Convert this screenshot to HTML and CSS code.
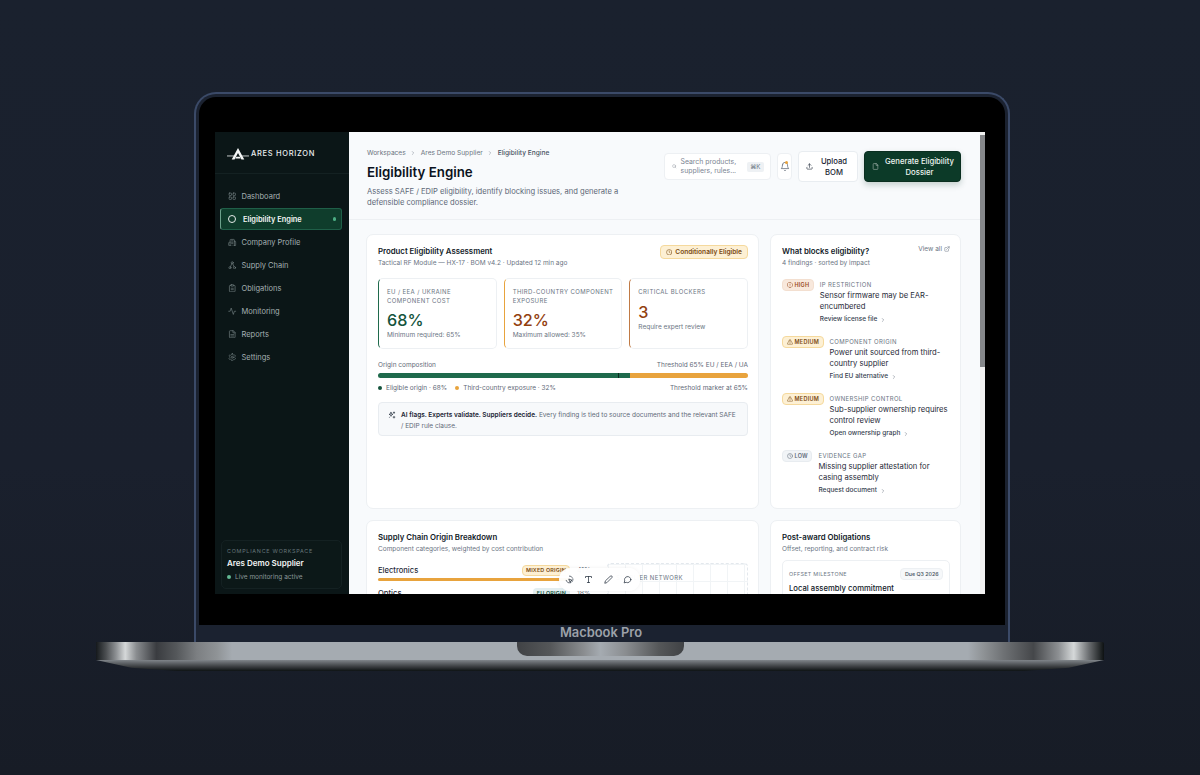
FILE: index.html
```html
<!DOCTYPE html>
<html>
<head>
    <meta charset="utf-8"/>
    <title>Eligibility Engine</title>
    <link rel="stylesheet" href="styles.css">
</head>

<body>
<svg class="defs" width="0" height="0">
    <symbol id="i-grid" viewBox="0 0 24 24"><rect x="3" y="3" width="7" height="7" rx="1.5"/><rect x="14" y="3" width="7" height="7" rx="1.5"/><rect x="3" y="14" width="7" height="7" rx="1.5"/><rect x="14" y="14" width="7" height="7" rx="1.5"/></symbol>
    <symbol id="i-building" viewBox="0 0 24 24"><path d="M6 22V6a2 2 0 0 1 2-2h8a2 2 0 0 1 2 2v16z"/><path d="M6 12H4a2 2 0 0 0-2 2v6a2 2 0 0 0 2 2h2"/><path d="M18 9h2a2 2 0 0 1 2 2v9a2 2 0 0 1-2 2h-2"/><path d="M10 8h4M10 12h4M10 16h4"/></symbol>
    <symbol id="i-network" viewBox="0 0 24 24"><circle cx="12" cy="5" r="3"/><circle cx="5.500" cy="19" r="3"/><circle cx="18.500" cy="19" r="3"/><path d="M10.500 7.700 7 16.300M13.500 7.700 17 16.300"/></symbol>
    <symbol id="i-clipboard" viewBox="0 0 24 24"><rect x="8" y="2" width="8" height="4" rx="1"/><path d="M16 4h2a2 2 0 0 1 2 2v14a2 2 0 0 1-2 2H6a2 2 0 0 1-2-2V6a2 2 0 0 1 2-2h2"/><path d="M9 12h6M9 16h6"/></symbol>
    <symbol id="i-activity" viewBox="0 0 24 24"><path d="M22 12h-4l-3 9L9 3l-3 9H2"/></symbol>
    <symbol id="i-file" viewBox="0 0 24 24"><path d="M14 2H6a2 2 0 0 0-2 2v16a2 2 0 0 0 2 2h12a2 2 0 0 0 2-2V8z"/><path d="M14 2v6h6M16 13H8M16 17H8"/></symbol>
    <symbol id="i-gear" viewBox="0 0 24 24"><path d="M12.220 2h-.44a2 2 0 0 0-2 2v.18a2 2 0 0 1-1 1.730l-.43.25a2 2 0 0 1-2 0l-.15-.08a2 2 0 0 0-2.730.730l-.22.38a2 2 0 0 0 .73 2.730l.15.1a2 2 0 0 1 1 1.720v.51a2 2 0 0 1-1 1.740l-.15.09a2 2 0 0 0-.73 2.730l.22.38a2 2 0 0 0 2.730.730l.15-.08a2 2 0 0 1 2 0l.43.25a2 2 0 0 1 1 1.730V20a2 2 0 0 0 2 2h.44a2 2 0 0 0 2-2v-.18a2 2 0 0 1 1-1.730l.43-.25a2 2 0 0 1 2 0l.15.08a2 2 0 0 0 2.730-.73l.22-.39a2 2 0 0 0-.73-2.730l-.15-.08a2 2 0 0 1-1-1.740v-.5a2 2 0 0 1 1-1.740l.15-.09a2 2 0 0 0 .73-2.730l-.22-.38a2 2 0 0 0-2.730-.73l-.15.08a2 2 0 0 1-2 0l-.43-.25a2 2 0 0 1-1-1.730V4a2 2 0 0 0-2-2z"/><circle cx="12" cy="12" r="3"/></symbol>
    <symbol id="i-clock" viewBox="0 0 24 24"><circle cx="12" cy="12" r="10"/><path d="M12 7v5l3 2"/></symbol>
    <symbol id="i-octagon" viewBox="0 0 24 24"><path d="M8 2h8l6 6v8l-6 6H8l-6-6V8z"/><path d="M12 8v4M12 16h.01"/></symbol>
    <symbol id="i-warn" viewBox="0 0 24 24"><path d="M10.300 3.900 1.800 18a2 2 0 0 0 1.700 3h17a2 2 0 0 0 1.700-3L13.700 3.900a2 2 0 0 0-3.400 0z"/><path d="M12 9v4M12 17h.01"/></symbol>
    <symbol id="i-chev" viewBox="0 0 24 24"><path d="m9 18 6-6-6-6"/></symbol>
</svg>

<div class="device">
    <div class="lid">
        <div class="bezel">
            <div class="screen">
                <aside class="sidebar">
                    <div class="brand">
                        <svg class="brand-mark" viewBox="0 0 28 16">
                            <path class="mark-fill" d="M14 0.500 22 15h-3.600L14 6.800 9.600 15H6z"/>
                            <path class="mark-fill" d="M11.800 11.500h4.400l1.200 2.300h-6.800z"/>
                            <path class="mark-line" d="M0 10.500h8.500M19.500 10.500H28"/>
                        </svg>
                        <span class="brand-name">ARES HORIZON</span>
                    </div>
                    <nav class="nav">
                        <a class="nav-item"><svg class="ico"><use href="#i-grid"/></svg>Dashboard</a>
                        <a class="nav-item active"><span class="ring"></span>Eligibility Engine<span class="live-dot"></span></a>
                        <a class="nav-item"><svg class="ico"><use href="#i-building"/></svg>Company Profile</a>
                        <a class="nav-item"><svg class="ico"><use href="#i-network"/></svg>Supply Chain</a>
                        <a class="nav-item"><svg class="ico"><use href="#i-clipboard"/></svg>Obligations</a>
                        <a class="nav-item"><svg class="ico"><use href="#i-activity"/></svg>Monitoring</a>
                        <a class="nav-item"><svg class="ico"><use href="#i-file"/></svg>Reports</a>
                        <a class="nav-item"><svg class="ico"><use href="#i-gear"/></svg>Settings</a>
                    </nav>
                    <div class="workspace">
                        <div class="workspace-label">COMPLIANCE WORKSPACE</div>
                        <div class="workspace-name">Ares Demo Supplier</div>
                        <div class="workspace-status"><span class="status-dot"></span>Live monitoring active</div>
                    </div>
                </aside>

                <main class="main">
                    <div class="scroll-area">
                        <header class="top">
                            <div class="top-left">
                                <div class="crumbs">
                                    <span>Workspaces</span><svg class="crumb-sep"><use href="#i-chev"/></svg>
                                    <span>Ares Demo Supplier</span><svg class="crumb-sep"><use href="#i-chev"/></svg>
                                    <span class="crumb-now">Eligibility Engine</span>
                                </div>
                                <h1>Eligibility Engine</h1>
                                <p class="lede">Assess SAFE / EDIP eligibility, identify blocking issues, and generate a defensible compliance dossier.</p>
                            </div>
                            <div class="actions">
                                <div class="search">
                                    <svg class="search-ico" viewBox="0 0 24 24"><circle cx="11" cy="11" r="8"/><path d="m21 21-4.300-4.300"/></svg>
                                    <span class="search-text">Search products, suppliers, rules...</span>
                                    <kbd>⌘K</kbd>
                                </div>
                                <button class="bell">
                                    <svg viewBox="0 0 24 24"><path d="M6 8a6 6 0 0 1 12 0c0 7 3 9 3 9H3s3-2 3-9"/><path d="M10.300 21a1.900 1.900 0 0 0 3.400 0"/></svg>
                                    <span class="bell-dot"></span>
                                </button>
                                <button class="btn">
                                    <svg viewBox="0 0 24 24"><path d="M21 15v4a2 2 0 0 1-2 2H5a2 2 0 0 1-2-2v-4"/><path d="m17 8-5-5-5 5M12 3v12"/></svg>
                                    <span class="btn-text">Upload BOM</span>
                                </button>
                                <button class="btn primary">
                                    <svg viewBox="0 0 24 24"><path d="M14 2H6a2 2 0 0 0-2 2v16a2 2 0 0 0 2 2h12a2 2 0 0 0 2-2V8z"/><path d="M14 2v6h6"/></svg>
                                    <span class="btn-text">Generate Eligibility Dossier</span>
                                </button>
                            </div>
                        </header>

                        <div class="content">
                            <section class="card assess">
                                <div class="card-head">
                                    <div>
                                        <h2>Product Eligibility Assessment</h2>
                                        <p class="sub">Tactical RF Module — HX-17 · BOM v4.2 · Updated 12 min ago</p>
                                    </div>
                                    <span class="verdict"><svg><use href="#i-clock"/></svg>Conditionally Eligible</span>
                                </div>
                                <div class="metrics">
                                    <div class="metric green">
                                        <div class="metric-label">EU / EEA / Ukraine component cost</div>
                                        <div class="metric-value">68%</div>
                                        <div class="metric-note">Minimum required: 65%</div>
                                    </div>
                                    <div class="metric amber">
                                        <div class="metric-label">Third-country component exposure</div>
                                        <div class="metric-value">32%</div>
                                        <div class="metric-note">Maximum allowed: 35%</div>
                                    </div>
                                    <div class="metric rust">
                                        <div class="metric-label">Critical blockers</div>
                                        <div class="metric-value">3</div>
                                        <div class="metric-note">Require expert review</div>
                                    </div>
                                </div>
                                <div class="split-row">
                                    <span>Origin composition</span>
                                    <span>Threshold 65% EU / EEA / UA</span>
                                </div>
                                <div class="origin-bar">
                                    <div class="origin-eligible" style="width:68%"><span class="marker"></span></div>
                                    <div class="origin-third" style="width:32%"></div>
                                </div>
                                <div class="split-row legend">
                                    <span class="legend-items">
                                        <span><i class="swatch sw-green"></i>Eligible origin · 68%</span>
                                        <span><i class="swatch sw-amber"></i>Third-country exposure · 32%</span>
                                    </span>
                                    <span>Threshold marker at 65%</span>
                                </div>
                                <div class="callout">
                                    <svg viewBox="0 0 24 24"><path d="M9 4 10.500 8.500 15 10l-4.500 1.500L9 16l-1.500-4.500L3 10l4.500-1.500z"/><path d="M18 3v4M16 5h4M18 16v5M15.500 18.500h5M4 19h.01"/></svg>
                                    <p><b>AI flags. Experts validate. Suppliers decide.</b> Every finding is tied to source documents and the relevant SAFE / EDIP rule clause.</p>
                                </div>
                            </section>

                            <section class="card blocks">
                                <div class="card-head">
                                    <div>
                                        <h2>What blocks eligibility?</h2>
                                        <p class="sub">4 findings · sorted by impact</p>
                                    </div>
                                    <a class="view-all">View all
                                        <svg viewBox="0 0 24 24"><path d="M18 13v6a2 2 0 0 1-2 2H5a2 2 0 0 1-2-2V8a2 2 0 0 1 2-2h6M15 3h6v6M10 14 21 3"/></svg>
                                    </a>
                                </div>
                                <div class="findings">
                                    <div class="finding">
                                        <span class="sev high"><svg><use href="#i-octagon"/></svg>HIGH</span>
                                        <div>
                                            <div class="finding-kind">IP RESTRICTION</div>
                                            <div class="finding-title">Sensor firmware may be EAR-encumbered</div>
                                            <a class="finding-link">Review license file<svg><use href="#i-chev"/></svg></a>
                                        </div>
                                    </div>
                                    <div class="finding">
                                        <span class="sev medium"><svg><use href="#i-warn"/></svg>MEDIUM</span>
                                        <div>
                                            <div class="finding-kind">COMPONENT ORIGIN</div>
                                            <div class="finding-title">Power unit sourced from third-country supplier</div>
                                            <a class="finding-link">Find EU alternative<svg><use href="#i-chev"/></svg></a>
                                        </div>
                                    </div>
                                    <div class="finding">
                                        <span class="sev medium"><svg><use href="#i-warn"/></svg>MEDIUM</span>
                                        <div>
                                            <div class="finding-kind">OWNERSHIP CONTROL</div>
                                            <div class="finding-title">Sub-supplier ownership requires control review</div>
                                            <a class="finding-link">Open ownership graph<svg><use href="#i-chev"/></svg></a>
                                        </div>
                                    </div>
                                    <div class="finding">
                                        <span class="sev low"><svg><use href="#i-clock"/></svg>LOW</span>
                                        <div>
                                            <div class="finding-kind">EVIDENCE GAP</div>
                                            <div class="finding-title">Missing supplier attestation for casing assembly</div>
                                            <a class="finding-link">Request document<svg><use href="#i-chev"/></svg></a>
                                        </div>
                                    </div>
                                </div>
                            </section>

                            <section class="card breakdown">
                                <h2>Supply Chain Origin Breakdown</h2>
                                <p class="sub">Component categories, weighted by cost contribution</p>
                                <div class="breakdown-body">
                                    <div class="cats">
                                        <div class="cat">
                                            <div class="cat-row"><span class="cat-name">Electronics</span><span class="tag mixed">MIXED ORIGIN</span><span class="cat-pct">41%</span></div>
                                            <div class="cat-bar"><div class="cat-fill" style="width:100%"></div></div>
                                        </div>
                                        <div class="cat">
                                            <div class="cat-row"><span class="cat-name">Optics</span><span class="tag eu">EU ORIGIN</span><span class="cat-pct">18%</span></div>
                                        </div>
                                    </div>
                                    <div class="network"><span>SUPPLIER NETWORK</span></div>
                                </div>
                            </section>

                            <section class="card obligations">
                                <h2>Post-award Obligations</h2>
                                <p class="sub">Offset, reporting, and contract risk</p>
                                <div class="oblig">
                                    <div class="oblig-top"><span>OFFSET MILESTONE</span><span class="due">Due Q3 2026</span></div>
                                    <div class="oblig-title">Local assembly commitment</div>
                                </div>
                            </section>
                        </div>
                    </div>
                    <div class="scrollbar"><div class="thumb"></div></div>

                    <div class="toolbar">
                        <svg viewBox="0 0 24 24"><path class="dash" d="M12 3a9 9 0 1 1-9 9"/><path d="m11 11 8 3-3.500 1.500L14 19z"/></svg>
                        <svg viewBox="0 0 24 24"><path d="M4 7V4h16v3M9 20h6M12 4v16"/></svg>
                        <svg viewBox="0 0 24 24"><path d="M17 3a2.800 2.800 0 0 1 4 4L7.500 20.500 2 22l1.500-5.500z"/></svg>
                        <svg viewBox="0 0 24 24"><path d="M21 12a8.500 8.500 0 0 1-12.500 7.500L3 21l1.500-5.500A8.500 8.500 0 1 1 21 12z"/></svg>
                    </div>
                </main>
            </div>
        </div>
        <div class="model">Macbook Pro</div>
    </div>
    <div class="base">
        <div class="notch"></div>
    </div>
    <div class="base-lip"></div>
</div>
</body>
</html>
```

FILE: styles.css
```css
* {
    margin: 0;
    padding: 0;
    box-sizing: border-box;
}
body {
    height: 775px;
    overflow: hidden;
    background: linear-gradient(180deg, #1a212e 0%, #1a202d 60%, #171c26 100%);
    font-family: Inter, "Liberation Sans", sans-serif;
    color: #0f172a;
}
.defs {
    position: absolute;
}
svg {
    fill: none;
    stroke: currentColor;
    stroke-width: 2;
    stroke-linecap: round;
    stroke-linejoin: round;
    flex-shrink: 0;
}

/* device frame */
.device {
    padding: 92px 0 0 96px;
}
.lid {
    width: 816px;
    margin-left: 98px;
    height: 550px;
    border: 2px solid #3b4a68;
    border-bottom: 0;
    border-radius: 22px 22px 0 0;
    padding: 3px 3px 0;
    background: #1b2230;
}
.bezel {
    height: 528px;
    background: #000;
    border-radius: 17px 17px 0 0;
    padding: 35px 20px 31px 16px;
}
.model {
    height: 17px;
    line-height: 15px;
    padding-right: 2px;
    text-align: center;
    font-size: 12.900px;
    font-weight: 600;
    color: #9ca1a9;
}
.base {
    width: 1008px;
    height: 18px;
    border-radius: 0 2px 0 0;
    background: linear-gradient(90deg, #15191c 0, #4c4f52 1%, #8e9194 2%, #d5d8d9 2.900%, #8a8d90 4%, #3a3c40 6%, #55585b 8%, #7c7f82 10%, #8f9396 12%, #a5abb1 13.500%, #a5abb1 86.500%, #8f9396 88%, #6f7275 90%, #45474a 93%, #8d9093 95.500%, #d5d8d9 97%, #6b6e71 98.500%, #0d1112 100%);
}
.notch {
    width: 167px;
    height: 14px;
    margin-left: 421px;
    border-radius: 0 0 10px 10px;
    background: linear-gradient(90deg, #404245 0, #555759 20%, #8a8d90 40%, #a5abb1 50%, #8a8d90 65%, #555759 85%, #404245 100%);
}
.base-lip {
    width: 1008px;
    height: 11px;
    clip-path: polygon(0 0, 100% 0, 96.500% 70%, 92% 100%, 8% 100%, 3.500% 70%);
    background: linear-gradient(180deg, #80858a 0, #5d6165 30%, #3b3e41 60%, #0e1314 100%);
}

/* app */
.screen {
    position: relative;
    height: 462px;
    display: flex;
    overflow: hidden;
    background: #f8fafc;
}
.sidebar {
    width: 134px;
    flex-shrink: 0;
    display: flex;
    flex-direction: column;
    background: #0b1617;
}
.brand {
    height: 42px;
    display: flex;
    align-items: center;
    gap: 2px;
    padding: 2px 0 0 12px;
    border-bottom: 1px solid #142122;
}
.brand-mark {
    width: 22px;
    height: 14px;
    stroke: none;
}
.mark-fill {
    fill: #f4f6f6;
}
.mark-line {
    stroke: #f4f6f6;
    stroke-width: 1;
}
.brand-name {
    font-size: 7.500px;
    font-weight: 500;
    letter-spacing: 0.700px;
    color: #e9edee;
}
.nav {
    display: flex;
    flex-direction: column;
    gap: 1px;
    padding: 11px 7px 0 5px;
}
.nav-item {
    height: 22px;
    display: flex;
    align-items: center;
    gap: 5px;
    padding-left: 7px;
    font-size: 7.500px;
    font-weight: 400;
    color: #a4b0b2;
    border: 1px solid transparent;
    border-radius: 3px;
}
.ico {
    width: 8.500px;
    height: 8.500px;
    stroke-width: 1.700;
    color: #7d8a8c;
}
.active {
    position: relative;
    color: #f3f6f5;
    font-size: 7.400px;
    font-weight: 600;
    gap: 7px;
    background-color: #0f3d2c;
    background-image: radial-gradient(#238058 0.500px, transparent 0.600px);
    background-size: 2px 2px;
    border-color: #1f5f48;
    border-left: 1.500px solid #6ca28b;
}
.ring {
    width: 8px;
    height: 8px;
    border: 1px solid #e6ebe9;
    border-radius: 50%;
}
.live-dot {
    position: absolute;
    right: 5px;
    top: 8px;
    width: 3.500px;
    height: 3.500px;
    border-radius: 50%;
    background: #4cae84;
}
.workspace {
    margin: auto 7px 5px 6px;
    height: 49px;
    padding: 7px 5px;
    border: 1px solid #142122;
    border-radius: 5px;
    background: #0c1818;
}
.workspace-label {
    font-size: 5.400px;
    letter-spacing: 0.750px;
    color: #66767a;
}
.workspace-name {
    margin-top: 4px;
    font-size: 8px;
    font-weight: 600;
    color: #f1f4f4;
}
.workspace-status {
    margin-top: 5px;
    display: flex;
    align-items: center;
    gap: 4px;
    font-size: 6.500px;
    color: #8a9799;
}
.status-dot {
    width: 4px;
    height: 4px;
    border-radius: 50%;
    background: #63b893;
}

.main {
    flex: 1;
    min-width: 0;
    display: flex;
    position: relative;
}
.scroll-area {
    flex: 1;
    min-width: 0;
}
.scrollbar {
    width: 5px;
    background: #f1f1f1;
}
.thumb {
    height: 232px;
    margin-top: 3px;
    background: #85878a;
}

/* header */
.top {
    height: 88px;
    display: flex;
    justify-content: space-between;
    padding: 18px 19px 0 18px;
    border-bottom: 1.500px solid #edf0f3;
}
.top-left {
    width: 268px;
}
.crumbs {
    display: flex;
    align-items: center;
    gap: 4.500px;
    font-size: 6.600px;
    color: #6b7480;
    height: 5px;
}
.crumb-sep {
    width: 6px;
    height: 6px;
    color: #7e8792;
}
.crumb-now {
    color: #475261;
    font-weight: 500;
}
h1 {
    margin-top: 6px;
    font-size: 13.300px;
    line-height: 22px;
    font-weight: 600;
    color: #0b1220;
}
.lede {
    margin-top: 3px;
    font-size: 7.600px;
    line-height: 11px;
    color: #5d6877;
}
.actions {
    display: flex;
    align-items: flex-start;
    gap: 6px;
    margin-top: 1px;
}
.search {
    margin-top: 2px;
    width: 107px;
    height: 27px;
    display: flex;
    align-items: center;
    padding: 0 6px 0 7px;
    gap: 4px;
    background: #fff;
    border: 1px solid #edf0f3;
    border-radius: 4px;
}
.search-ico {
    width: 4.500px;
    height: 4.500px;
    color: #7d8792;
}
.search-text {
    flex: 1;
    font-size: 6.900px;
    line-height: 8.500px;
    color: #7b8592;
}
kbd {
    font-family: inherit;
    font-size: 6.200px;
    padding: 1.500px 3.500px;
    border-radius: 2px;
    background: #eef1f4;
    color: #6c7683;
}
.bell {
    position: relative;
    margin-top: 2px;
    width: 15px;
    height: 27px;
    display: flex;
    align-items: center;
    justify-content: center;
    background: #fff;
    border: 1px solid #edf0f3;
    border-radius: 4px;
    color: #4a5563;
}
.bell svg {
    width: 10px;
    height: 11px;
    stroke-width: 1.600;
}
.bell-dot {
    position: absolute;
    top: 7px;
    right: 3px;
    width: 3px;
    height: 3px;
    border-radius: 50%;
    background: #e9a23b;
}
.btn {
    height: 31px;
    width: 60px;
    display: flex;
    align-items: center;
    gap: 5px;
    padding: 0 7px;
    background: #fff;
    border: 1px solid #e9edf1;
    border-radius: 4px;
    font-family: inherit;
    font-size: 7.700px;
    font-weight: 500;
    line-height: 11px;
    color: #1a2433;
}
.btn svg {
    width: 7px;
    height: 7px;
    stroke-width: 2;
}
.btn-text {
    flex: 1;
    text-align: center;
}
.primary {
    width: 97px;
    padding: 0 5px 0 7px;
    color: #eef5f1;
    background-color: #0c3a28;
    background-image: radial-gradient(#2a8660 0.500px, transparent 0.600px);
    background-size: 2px 2px;
    border-color: #0a2e20;
    box-shadow: 0 3px 6px rgba(12, 58, 40, 0.220);
}
.primary svg {
    color: #a9b8b1;
}

/* cards */
.content {
    display: grid;
    grid-template-columns: 393px 191px;
    grid-template-rows: 275px auto;
    gap: 11px;
    padding: 14px 0 0 17px;
}
.card {
    background: #fff;
    border: 1px solid #edf0f3;
    border-radius: 7px;
    padding: 11px 10px 11px 11px;
}
.card-head {
    display: flex;
    justify-content: space-between;
    align-items: flex-start;
}
h2 {
    font-size: 7.800px;
    line-height: 11px;
    font-weight: 600;
    color: #111a28;
}
.sub {
    margin-top: 2px;
    font-size: 6.500px;
    line-height: 9px;
    color: #6b7583;
}
.verdict {
    display: flex;
    align-items: center;
    gap: 3px;
    height: 14px;
    margin-top: -1px;
    padding: 0 5px;
    background: #fdf0d4;
    border: 1px solid #f5d99d;
    border-radius: 4px;
    font-size: 6.600px;
    font-weight: 600;
    color: #7b4a12;
}
.verdict svg {
    width: 6.500px;
    height: 6.500px;
}
.metrics {
    display: grid;
    grid-template-columns: repeat(3, 1fr);
    gap: 7px;
    margin-top: 10px;
}
.metric {
    height: 71px;
    padding: 9px 6px 9px 8px;
    border: 1px solid #edf0f3;
    border-left-width: 1.500px;
    border-radius: 5px;
}
.green {
    border-left-color: #1f6a4c;
}
.amber {
    border-left-color: #e8a33d;
}
.rust {
    border-left-color: #c07a45;
}
.metric-label {
    font-size: 6px;
    line-height: 8.500px;
    letter-spacing: 0.400px;
    text-transform: uppercase;
    color: #6b7583;
}
.metric-value {
    margin-top: 5px;
    font-size: 16.200px;
    line-height: 21px;
    font-weight: 500;
}
.green .metric-value {
    color: #14533c;
}
.amber .metric-value,
.rust .metric-value {
    color: #92400e;
}
.metric-note {
    font-size: 6.500px;
    line-height: 9px;
    color: #6b7583;
}
.split-row {
    display: flex;
    justify-content: space-between;
    margin-top: 12px;
    font-size: 6.500px;
    line-height: 9px;
    color: #5f6a78;
}
.origin-bar {
    display: flex;
    height: 5px;
    margin-top: 3px;
    border-radius: 3px;
    overflow: hidden;
}
.origin-eligible {
    position: relative;
    background: #1f6a4c;
}
.marker {
    position: absolute;
    right: 11px;
    top: 0;
    width: 1px;
    height: 5px;
    background: #0b2a1f;
}
.origin-third {
    background: #e8a33d;
}
.legend {
    margin-top: 6px;
}
.legend-items {
    display: flex;
    gap: 8px;
}
.swatch {
    display: inline-block;
    width: 4px;
    height: 4px;
    margin-right: 4px;
    border-radius: 50%;
    vertical-align: 0.500px;
}
.sw-green {
    background: #14533c;
}
.sw-amber {
    background: #e8a33d;
}
.callout {
    display: flex;
    gap: 5px;
    height: 34px;
    margin-top: 9px;
    padding: 7px 9px;
    background: #f7f9fb;
    border: 1px solid #e8ecf0;
    border-radius: 4px;
}
.callout svg {
    width: 8px;
    height: 8px;
    margin-top: 1px;
    color: #1f2a38;
    stroke-width: 2;
}
.callout p {
    font-size: 6.500px;
    line-height: 10.500px;
    color: #5f6a78;
}
.callout b {
    font-weight: 600;
    color: #1a2433;
}

/* findings */
.view-all {
    display: flex;
    align-items: center;
    gap: 2px;
    margin-top: -1px;
    font-size: 6.500px;
    color: #6b7583;
}
.view-all svg {
    width: 6px;
    height: 6px;
}
.findings {
    margin-top: 13px;
}
.finding {
    display: flex;
    align-items: flex-start;
    gap: 6px;
    height: 57px;
}
.sev {
    display: flex;
    align-items: center;
    gap: 2px;
    height: 12px;
    padding: 0 3.500px;
    border-radius: 4px;
    border: 1px solid transparent;
    font-size: 5.500px;
    font-weight: 600;
    letter-spacing: 0.250px;
    margin-top: -2px;
}
.sev svg {
    width: 6px;
    height: 6px;
}
.high {
    background: #f8e8dc;
    border-color: #f3dfd0;
    color: #9a4a1c;
}
.medium {
    background: #fdf0d4;
    border-color: #f5d99d;
    color: #7b4a12;
}
.low {
    background: #f1f4f7;
    border-color: #e8ecf0;
    color: #5f6a78;
}
.finding-kind {
    font-size: 6px;
    line-height: 8px;
    letter-spacing: 0.350px;
    color: #6b7583;
}
.finding-title {
    margin-top: 2px;
    font-size: 7.650px;
    line-height: 10.500px;
    color: #1f2a38;
}
.finding-link {
    display: flex;
    align-items: center;
    gap: 3px;
    margin-top: 3px;
    font-size: 6.500px;
    line-height: 9px;
    font-weight: 500;
    color: #364150;
}
.finding-link svg {
    width: 6px;
    height: 6px;
    color: #6b7583;
}

/* second row */
.breakdown-body {
    display: flex;
    gap: 8px;
    margin-top: 9px;
}
.cats {
    width: 221px;
}
.cat-row {
    display: flex;
    align-items: center;
    height: 14px;
    font-size: 7.600px;
    color: #1f2a38;
}
.cat-name {
    flex: 1;
    font-weight: 500;
}
.cat-pct {
    width: 22px;
    margin-left: 7px;
    font-size: 6.900px;
    color: #5f6a78;
}
.tag {
    height: 11px;
    line-height: 9px;
    padding: 0 3px;
    border: 1px solid transparent;
    border-radius: 4px;
    font-size: 5.400px;
    font-weight: 600;
    letter-spacing: 0.200px;
}
.mixed {
    background: #fdf0d4;
    border-color: #f5d99d;
    color: #7b4a12;
}
.eu {
    background: #e3eef0;
    color: #14533c;
}
.cat-bar {
    width: 192px;
    height: 3px;
    margin: 1px 0 5px;
    border-radius: 2px;
    background: #eef1f4;
}
.cat-fill {
    height: 3px;
    border-radius: 2px;
    background: #e8a33d;
}
.network {
    flex: 1;
    height: 80px;
    padding: 10px 8px;
    border: 1px dashed #e3e8ed;
    border-radius: 4px;
    background-image: linear-gradient(#f1f4f6 1px, transparent 1px), linear-gradient(90deg, #f1f4f6 1px, transparent 1px);
    background-size: 17px 17px;
    font-size: 6px;
    letter-spacing: 0.400px;
    color: #6b7583;
}
.oblig {
    margin-top: 6px;
    padding: 7px 6px;
    border: 1px solid #edf0f3;
    border-radius: 5px;
}
.oblig-top {
    display: flex;
    justify-content: space-between;
    align-items: center;
    font-size: 5.400px;
    letter-spacing: 0.300px;
    color: #6b7583;
}
.due {
    padding: 2px 3.500px;
    border: 1px solid #edf0f3;
    border-radius: 4px;
    background: #f6f8fa;
    font-size: 5.300px;
    font-weight: 500;
    letter-spacing: 0;
    color: #475261;
}
.oblig-title {
    margin-top: 4px;
    font-size: 7.700px;
    font-weight: 500;
    color: #111a28;
}

/* floating annotate toolbar */
.toolbar {
    position: absolute;
    left: 210px;
    top: 436px;
    width: 81px;
    height: 23px;
    display: flex;
    align-items: center;
    justify-content: space-between;
    padding: 0 7.500px 0 5.500px;
    background: rgba(255, 255, 255, 0.960);
    border-radius: 12px;
    box-shadow: 0 0 4px rgba(15, 23, 42, 0.060);
    color: #2a3442;
}
.toolbar svg {
    width: 9px;
    height: 9px;
}
.dash {
    stroke-dasharray: 3 3;
}
```
